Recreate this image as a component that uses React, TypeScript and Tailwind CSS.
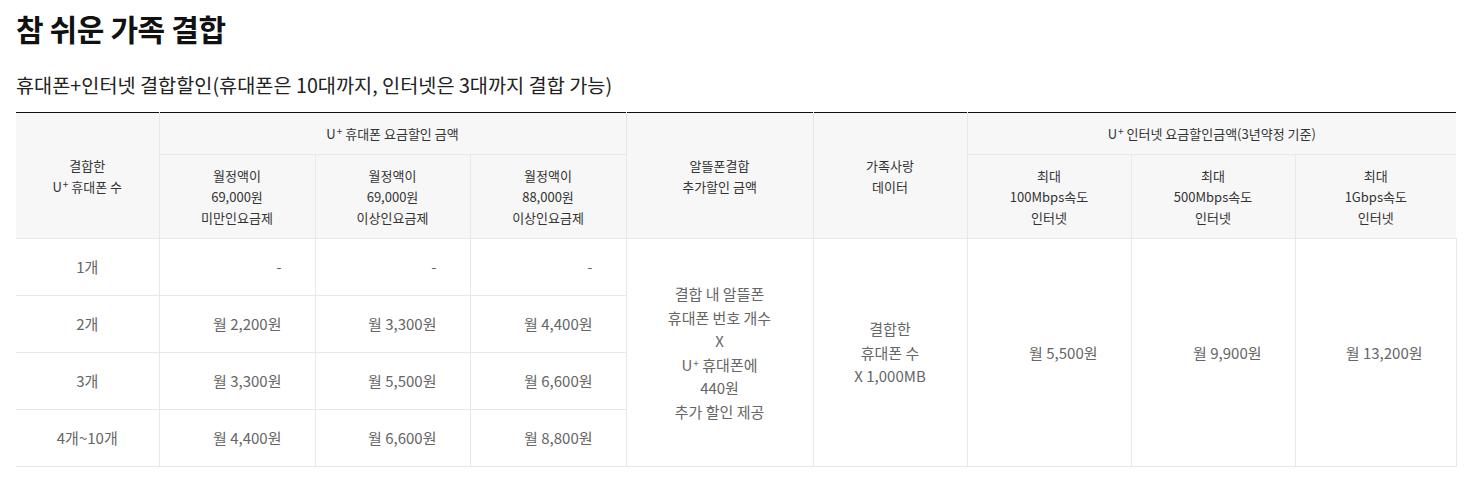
import React from "react";

const font = { fontFamily: '"Noto Sans CJK KR", "Noto Sans", sans-serif' };

function Up() {
  return (
    <>
      U<sup className="text-[10px] relative -top-[4px] ml-[1px]">+</sup>
    </>
  );
}

const th = "border border-[#e8e8e8] bg-[#f7f7f7] text-[13px] leading-[21px] text-[#333] font-normal text-center align-middle";
const td = "border border-[#e8e8e8] text-[15px] leading-[23.5px] text-[#666] align-middle";

export default function App() {
  const rows = [
    ["1개", "-", "-", "-"],
    ["2개", "월 2,200원", "월 3,300원", "월 4,400원"],
    ["3개", "월 3,300원", "월 5,500원", "월 6,600원"],
    ["4개~10개", "월 4,400원", "월 6,600원", "월 8,800원"],
  ];
  return (
    <div className="bg-white w-[1465px] h-[480px] px-4 pt-[7px]" style={font}>
      <h1 className="text-[30px] leading-[42px] font-bold text-[#111] tracking-[-0.4px]">참 쉬운 가족 결합</h1>
      <p className="mt-[22px] text-[19.7px] leading-[28px] text-[#222]">
        휴대폰+인터넷 결합할인(휴대폰은 10대까지, 인터넷은 3대까지 결합 가능)
      </p>
      <table className="mt-[13px] w-[1440px] table-fixed border-collapse border-t border-t-[#111] border-l-0">
        <colgroup>
          <col className="w-[143px]" />
          <col className="w-[156px]" />
          <col className="w-[155px]" />
          <col className="w-[156px]" />
          <col className="w-[187px]" />
          <col className="w-[154px]" />
          <col className="w-[164px]" />
          <col className="w-[164px]" />
          <col className="w-[161px]" />
        </colgroup>
        <thead>
          <tr className="h-[42px]">
            <th rowSpan={2} className={th + " border-l-0 border-t-[#111]"}>
              결합한<br />
              <Up /> 휴대폰 수
            </th>
            <th colSpan={3} className={th + " border-t-[#111]"}>
              <Up /> 휴대폰 요금할인 금액
            </th>
            <th rowSpan={2} className={th + " border-t-[#111]"}>
              알뜰폰결합<br />추가할인 금액
            </th>
            <th rowSpan={2} className={th + " border-t-[#111]"}>
              가족사랑<br />데이터
            </th>
            <th colSpan={3} className={th + " border-t-[#111] border-r-0"}>
              <Up /> 인터넷 요금할인금액(3년약정 기준)
            </th>
          </tr>
          <tr className="h-[84px]">
            <th className={th}>월정액이<br />69,000원<br />미만인요금제</th>
            <th className={th}>월정액이<br />69,000원<br />이상인요금제</th>
            <th className={th}>월정액이<br />88,000원<br />이상인요금제</th>
            <th className={th}>최대<br />100Mbps속도<br />인터넷</th>
            <th className={th}>최대<br />500Mbps속도<br />인터넷</th>
            <th className={th + " border-r-0"}>최대<br />1Gbps속도<br />인터넷</th>
          </tr>
        </thead>
        <tbody>
          {rows.map((r, i) => (
            <tr key={i} className="h-[57px]">
              <td className={td + " text-center border-l-0"}>{r[0]}</td>
              <td className={td + " text-right pr-[33px]"}>{r[1]}</td>
              <td className={td + " text-right pr-[33px]"}>{r[2]}</td>
              <td className={td + " text-right pr-[33px]"}>{r[3]}</td>
              {i === 0 && (
                <>
                  <td rowSpan={4} className={td + " text-center"}>
                    결합 내 알뜰폰<br />휴대폰 번호 개수<br />X<br />
                    <Up /> 휴대폰에<br />440원<br />추가 할인 제공
                  </td>
                  <td rowSpan={4} className={td + " text-center"}>
                    결합한<br />휴대폰 수<br />X 1,000MB
                  </td>
                  <td rowSpan={4} className={td + " text-right pr-[33px]"}>월 5,500원</td>
                  <td rowSpan={4} className={td + " text-right pr-[33px]"}>월 9,900원</td>
                  <td rowSpan={4} className={td + " text-right pr-[33px]"}>월 13,200원</td>
                </>
              )}
            </tr>
          ))}
        </tbody>
      </table>
    </div>
  );
}
